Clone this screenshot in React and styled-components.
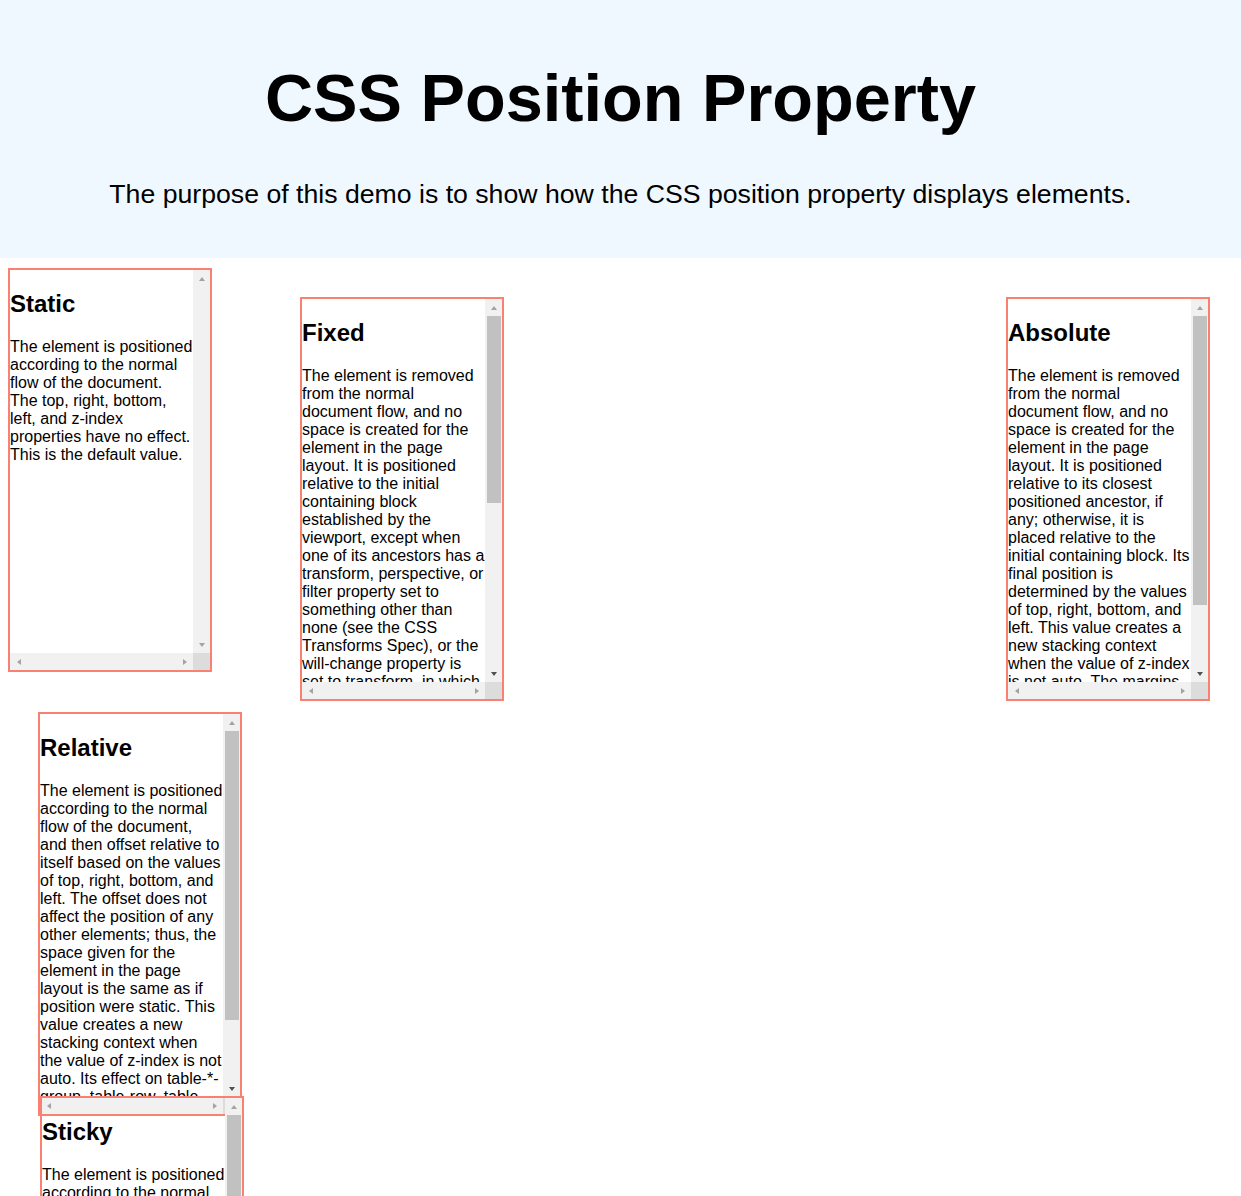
import React, { useLayoutEffect, useRef, useState } from "react";
import styled, { createGlobalStyle, css } from "styled-components";

const Global = createGlobalStyle`
  html, body {
    margin: 0;
    padding: 0;
    overflow: hidden;
    background: #ffffff;
    font-family: "Liberation Sans", Arial, sans-serif;
    color: #000;
  }
`;

const Page = styled.div`
  width: 1241px;
  height: 1196px;
  overflow: hidden;
`;

const Header = styled.header`
  background: #f0f8ff;
  text-align: center;
  padding: 60px 0 48px;
`;

const Title = styled.h1`
  margin: 0;
  font-size: 66.67px;
  line-height: 76px;
  font-weight: bold;
`;

const Subtitle = styled.p`
  margin: 42px 0 0;
  font-size: 26.67px;
  line-height: 32px;
`;

const Main = styled.main`
  padding: 10px 0 0 8px;
`;

const TopRow = styled.div`
  display: flex;
  align-items: flex-start;
`;

const Box = styled.section`
  position: relative;
  flex: none;
  box-sizing: content-box;
  width: 200px;
  height: 400px;
  border: 2px solid #fa8072;
  display: grid;
  grid-template-columns: 183px 17px;
  grid-template-rows: 383px 17px;
  margin: ${(p) => p.$margin || "0"};
`;

const Viewport = styled.div`
  overflow: hidden;
`;

const BoxTitle = styled.h2`
  margin: 19.92px 0;
  font-size: 24px;
  font-weight: bold;
  line-height: normal;
`;

const BoxText = styled.p`
  margin: 16px 0;
  font-size: 16px;
  line-height: normal;
`;

const ScrollTrack = styled.div`
  display: flex;
  flex-direction: ${(p) => (p.$vertical ? "column" : "row")};
  background: #f1f1f1;
`;

const TrackSpace = styled.div`
  flex: 1;
  display: flex;
  flex-direction: column;
`;

const Thumb = styled.div`
  margin: 0 1px 0 2px;
  background: #c1c1c1;
`;

const Corner = styled.div`
  background: #dcdcdc;
`;

const ArrowButton = styled.div`
  flex: none;
  width: 17px;
  height: 17px;
  display: flex;
  align-items: center;
  justify-content: center;
`;

const arrowShapes = {
  up: css`
    border-left: 3.5px solid transparent;
    border-right: 3.5px solid transparent;
    border-bottom: 4px solid var(--arrow);
  `,
  down: css`
    border-left: 3.5px solid transparent;
    border-right: 3.5px solid transparent;
    border-top: 4px solid var(--arrow);
  `,
  left: css`
    border-top: 3.5px solid transparent;
    border-bottom: 3.5px solid transparent;
    border-right: 4px solid var(--arrow);
  `,
  right: css`
    border-top: 3.5px solid transparent;
    border-bottom: 3.5px solid transparent;
    border-left: 4px solid var(--arrow);
  `,
};

const Arrow = styled.span`
  --arrow: ${(p) => (p.$active ? "#505050" : "#a3a3a3")};
  width: 0;
  height: 0;
  ${(p) => arrowShapes[p.$dir]}
`;

const items = {
  static: {
    title: "Static",
    text: "The element is positioned according to the normal flow of the document. The top, right, bottom, left, and z-index properties have no effect. This is the default value.",
  },
  fixed: {
    title: "Fixed",
    text: "The element is removed from the normal document flow, and no space is created for the element in the page layout. It is positioned relative to the initial containing block established by the viewport, except when one of its ancestors has a transform, perspective, or filter property set to something other than none (see the CSS Transforms Spec), or the will-change property is set to transform, in which case that ancestor behaves as the containing block. (Note that there are browser inconsistencies with perspective and filter contributing to containing block formation.) Its final position is determined by the values of top, right, bottom, and left. This value always creates a new stacking context. In printed documents, the element is placed in the same position on every page.",
  },
  absolute: {
    title: "Absolute",
    text: "The element is removed from the normal document flow, and no space is created for the element in the page layout. It is positioned relative to its closest positioned ancestor, if any; otherwise, it is placed relative to the initial containing block. Its final position is determined by the values of top, right, bottom, and left. This value creates a new stacking context when the value of z-index is not auto. The margins of absolutely positioned boxes do not collapse with other margins.",
  },
  relative: {
    title: "Relative",
    text: "The element is positioned according to the normal flow of the document, and then offset relative to itself based on the values of top, right, bottom, and left. The offset does not affect the position of any other elements; thus, the space given for the element in the page layout is the same as if position were static. This value creates a new stacking context when the value of z-index is not auto. Its effect on table-*-group, table-row, table-column, table-cell, and table-caption elements is undefined.",
  },
  sticky: {
    title: "Sticky",
    text: "The element is positioned according to the normal flow of the document, and then offset relative to its nearest scrolling ancestor and containing block (nearest block-level ancestor, including table-related elements), based on the values of top, right, bottom, and left. The offset does not affect the position of any other elements. This value always creates a new stacking context. Note that a sticky element \"sticks\" to its nearest ancestor that has a \"scrolling mechanism\" (created when overflow is hidden, scroll, auto, or overlay), even if that ancestor isn't the nearest actually scrolling ancestor.",
  },
};

const TRACK = 400 - 17 - 34;

function PositionBox({ item, margin }) {
  const ref = useRef(null);
  const [thumb, setThumb] = useState(0);

  useLayoutEffect(() => {
    const el = ref.current;
    if (!el) return;
    const { scrollHeight, clientHeight } = el;
    if (scrollHeight > clientHeight + 1) {
      setThumb(Math.max(17, Math.round((TRACK * clientHeight) / scrollHeight)));
    } else {
      setThumb(0);
    }
  }, []);

  const scrolls = thumb > 0;

  return (
    <Box $margin={margin}>
      <Viewport ref={ref}>
        <BoxTitle>{item.title}</BoxTitle>
        <BoxText>{item.text}</BoxText>
      </Viewport>
      <ScrollTrack $vertical>
        <ArrowButton>
          <Arrow $dir="up" />
        </ArrowButton>
        <TrackSpace>{scrolls && <Thumb style={{ height: thumb }} />}</TrackSpace>
        <ArrowButton>
          <Arrow $dir="down" $active={scrolls} />
        </ArrowButton>
      </ScrollTrack>
      <ScrollTrack>
        <ArrowButton>
          <Arrow $dir="left" />
        </ArrowButton>
        <TrackSpace />
        <ArrowButton>
          <Arrow $dir="right" />
        </ArrowButton>
      </ScrollTrack>
      <Corner />
    </Box>
  );
}

export default function App() {
  return (
    <Page>
      <Global />
      <Header>
        <Title>CSS Position Property</Title>
        <Subtitle>
          The purpose of this demo is to show how the CSS position property displays elements.
        </Subtitle>
      </Header>
      <Main>
        <TopRow>
          <PositionBox item={items.static} />
          <PositionBox item={items.fixed} margin="29px 0 0 88px" />
          <PositionBox item={items.absolute} margin="29px 31px 0 auto" />
        </TopRow>
        <PositionBox item={items.relative} margin="11px 0 0 30px" />
        <PositionBox item={items.sticky} margin="-20px 0 0 32px" />
      </Main>
    </Page>
  );
}
